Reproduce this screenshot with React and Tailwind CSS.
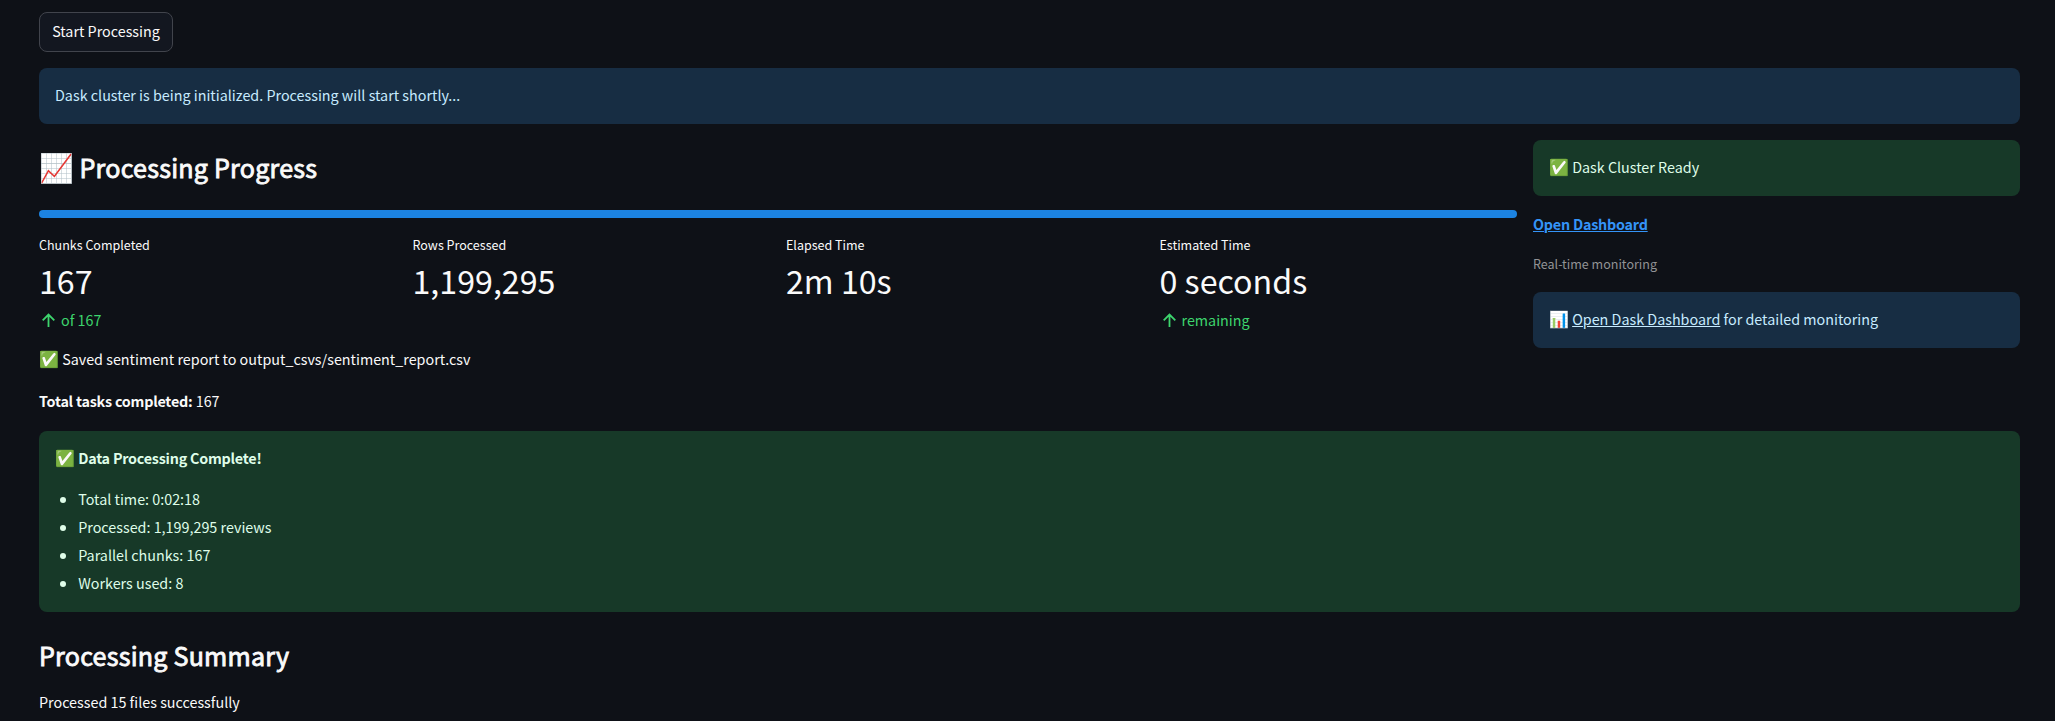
import React from "react";

const metrics = [
  { label: "Chunks Completed", value: "167", delta: "of 167" },
  { label: "Rows Processed", value: "1,199,295" },
  { label: "Elapsed Time", value: "2m 10s" },
  { label: "Estimated Time", value: "0 seconds", delta: "remaining" },
];

const results = [
  "Total time: 0:02:18",
  "Processed: 1,199,295 reviews",
  "Parallel chunks: 167",
  "Workers used: 8",
];

function ArrowUp() {
  return (
    <svg viewBox="0 0 20 20" className="h-5 w-5 shrink-0" fill="none" stroke="currentColor" strokeWidth="1.8">
      <path d="M9.5 17V4.5M3.7 10.3l5.8-5.8 5.8 5.8" />
    </svg>
  );
}

function Emoji({ children }) {
  return <span className="text-[16px] leading-none">{children}</span>;
}

function Strong({ children }) {
  return <strong className="font-semibold tracking-[-0.22px]">{children}</strong>;
}

function Heading({ children }) {
  return (
    <span className="font-normal tracking-[0.23px] [-webkit-text-stroke:0.85px_currentColor]">{children}</span>
  );
}

function Metric({ label, value, delta }) {
  return (
    <div className="flex flex-col">
      <div className="text-[12.53px] leading-5">{label}</div>
      <div className="text-[32.2px] leading-[50px]">{value}</div>
      {delta && (
        <div className="flex h-[30px] items-center gap-[2px] text-[#3dd56d]">
          <ArrowUp />
          <span>{delta}</span>
        </div>
      )}
    </div>
  );
}

export default function App() {
  return (
    <div className="h-[721px] overflow-hidden bg-[#0e1117] pt-3 pr-[35px] pl-[39px] font-['Noto_Sans_CJK_JP','Noto_Color_Emoji',sans-serif] text-[14.33px] leading-6 text-[#fafafa]">
      <button className="flex h-10 w-[134px] justify-center rounded-lg border border-[#41444c] bg-[#131720] pt-[6px]">
        Start Processing
      </button>
      <div className="mt-4 h-14 rounded-lg bg-[#172d43] px-4 pt-[15px] text-[#c7ebff]">
        Dask cluster is being initialized. Processing will start shortly...
      </div>

      <div className="mt-4 flex h-[207px] gap-4">
        <div className="w-[1478px]">
          <h2 className="h-[70px] text-[25.07px] leading-[54px]">
            <span className="text-[28px] leading-none">📈</span> <Heading>Processing Progress</Heading>
          </h2>
          <div className="h-2 rounded bg-[#1c83e1]" />
          <div className="mt-[17px] grid grid-cols-4 gap-4">
            {metrics.map((m) => (
              <Metric key={m.label} {...m} />
            ))}
          </div>
        </div>
        <div className="flex-1">
          <div className="h-14 rounded-lg bg-[#173928] px-4 pt-[15px] text-[#dffde9]">
            <Emoji>✅</Emoji> Dask Cluster Ready
          </div>
          <div className="mt-4 text-[#3494f8]">
            <a className="underline">
              <Strong>Open Dashboard</Strong>
            </a>
          </div>
          <div className="mt-[18px] text-[12.53px] leading-5 text-[#929395]">Real-time monitoring</div>
          <div className="mt-[18px] h-14 rounded-lg bg-[#172d43] px-4 pt-[15px] text-[#c7ebff]">
            <Emoji>📊</Emoji> <a className="underline">Open Dask Dashboard</a> for detailed monitoring
          </div>
        </div>
      </div>

      <p>
        <Emoji>✅</Emoji> Saved sentiment report to output_csvs/sentiment_report.csv
      </p>
      <p className="mt-[18px]">
        <Strong>Total tasks completed:</Strong> 167
      </p>

      <div className="mt-[18px] h-[181px] rounded-lg bg-[#173928] px-4 pt-[15px] text-[#dffde9]">
        <p>
          <Emoji>✅</Emoji> <Strong>Data Processing Complete!</Strong>
        </p>
        <ul className="mt-[15px] list-disc pl-[23.2px] leading-7">
          {results.map((r) => (
            <li key={r}>{r}</li>
          ))}
        </ul>
      </div>

      <h2 className="mt-[26px] text-[25.07px] leading-[34px]">
        <Heading>Processing Summary</Heading>
      </h2>
      <p className="mt-[18px]">Processed 15 files successfully</p>
    </div>
  );
}
